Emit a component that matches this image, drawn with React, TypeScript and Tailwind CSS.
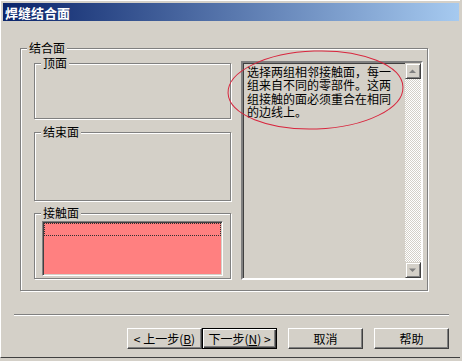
import type { ReactNode } from "react";

type GroupProps = {
  label: string;
  className?: string;
  children?: ReactNode;
};

// etched group box, label sits over the top line
function Group({ label, className = "", children }: GroupProps) {
  return (
    <div
      className={`relative border border-[#808080] shadow-[inset_1px_1px_0_#fff,1px_1px_0_#fff] ${className}`}
    >
      <span className="absolute -top-[8px] left-[6px] bg-[#d4d0c8] px-[2px] text-[12px] leading-[14px] text-black">
        {label}
      </span>
      {children}
    </div>
  );
}

function Arrow({ up }: { up?: boolean }) {
  return (
    <svg width="8" height="5" viewBox="0 0 8 5">
      {up ? (
        <path d="M0 4h7L3.5 0.5z" fill="#808080" />
      ) : (
        <path d="M0 0.5h7L3.5 4z" fill="#808080" />
      )}
    </svg>
  );
}

function ScrollButton({ up }: { up?: boolean }) {
  return (
    <div className="flex h-[16px] w-[16px] items-center justify-center border border-t-[#d4d0c8] border-l-[#d4d0c8] border-r-[#404040] border-b-[#404040] bg-[#d4d0c8] shadow-[inset_1px_1px_0_#fff,inset_-1px_-1px_0_#808080]">
      <Arrow up={up} />
    </div>
  );
}

type ButtonProps = {
  children: ReactNode;
  primary?: boolean;
};

function Button({ children, primary }: ButtonProps) {
  return (
    <button
      className={
        primary
          ? "flex h-[21px] w-[75px] items-center justify-center border border-black bg-[#d4d0c8] text-[12px] leading-none text-black shadow-[inset_1px_1px_0_#fff,inset_-1px_-1px_0_#404040,inset_-2px_-2px_0_#808080]"
          : "flex h-[21px] w-[75px] items-center justify-center border border-t-white border-l-white border-r-[#404040] border-b-[#404040] bg-[#d4d0c8] text-[12px] leading-none text-black shadow-[inset_-1px_-1px_0_#808080]"
      }
    >
      {children}
    </button>
  );
}

export default function App() {
  return (
    <div className="relative h-[361px] w-[462px] overflow-hidden bg-[#d4d0c8] font-['Noto_Sans_CJK_SC','Liberation_Sans',sans-serif]">
      <div className="flex h-[358px] w-[460px] flex-col border-l border-t border-b border-l-white border-t-white border-b-[#404040] px-[2px] pt-[2px]">
        <div className="flex h-[18px] w-[456px] items-center bg-[linear-gradient(to_right,#0a246a,#a6caf0)] pl-[2px] text-[13px] font-bold leading-none text-white">
          焊缝结合面
        </div>

        <Group label="结合面" className="ml-[17px] mt-[27px] flex h-[243px] w-[408px] items-start pl-[13px]">
          <div className="mt-[14px] flex w-[197px] flex-col">
            <Group label="顶面" className="h-[56px]" />
            <Group label="结束面" className="mt-[13px] h-[69px]" />
            <Group label="接触面" className="mt-[12px] h-[66px] px-[7px] pt-[7px]">
              <div className="h-[55px] border border-t-[#808080] border-l-[#808080] border-r-white border-b-white bg-[#ff8080] p-[1px] shadow-[inset_1px_1px_0_#404040,inset_-1px_-1px_0_#d4d0c8]">
                <div className="h-[13px] border border-dotted border-[#303030]" />
              </div>
            </Group>
          </div>

          <div className="ml-[10px] mt-[12px] flex h-[219px] w-[182px] border-2 border-t-[#808080] border-l-[#808080] border-r-white border-b-white bg-[#d4d0c8] shadow-[inset_1px_1px_0_#404040]">
            <div className="flex-1 pl-[4px] pt-[2px] text-[12px] leading-[13.3px] text-black">
              选择两组相邻接触面，每一
              <br />
              组来自不同的零部件。这两
              <br />
              组接触的面必须重合在相同
              <br />
              的边线上。
            </div>
            <div className="flex w-[16px] flex-col">
              <ScrollButton up />
              <div className="flex-1 bg-[image:conic-gradient(#fff_25%,#d4d0c8_0_50%,#fff_0_75%,#d4d0c8_0)] bg-[length:2px_2px]" />
              <ScrollButton />
            </div>
          </div>
        </Group>

        <div className="ml-[11px] mt-[23px] h-[2px] w-[435px] border-t border-b border-t-[#808080] border-b-white" />

        <div className="ml-[124px] mt-[12px] flex">
          <Button>
            &lt; 上一步(<span className="underline">B</span>)
          </Button>
          <Button primary>
            下一步(<span className="underline">N</span>) &gt;
          </Button>
          <div className="ml-[11px]">
            <Button>取消</Button>
          </div>
          <div className="ml-[11px]">
            <Button>帮助</Button>
          </div>
        </div>
      </div>

      <svg
        className="pointer-events-none absolute left-0 top-0"
        width="462"
        height="361"
        viewBox="0 0 462 361"
      >
        <ellipse
          cx="315.5"
          cy="90"
          rx="87.5"
          ry="39"
          transform="rotate(-2 315.5 90)"
          fill="none"
          stroke="#d8263e"
          strokeWidth="1"
        />
      </svg>
    </div>
  );
}
